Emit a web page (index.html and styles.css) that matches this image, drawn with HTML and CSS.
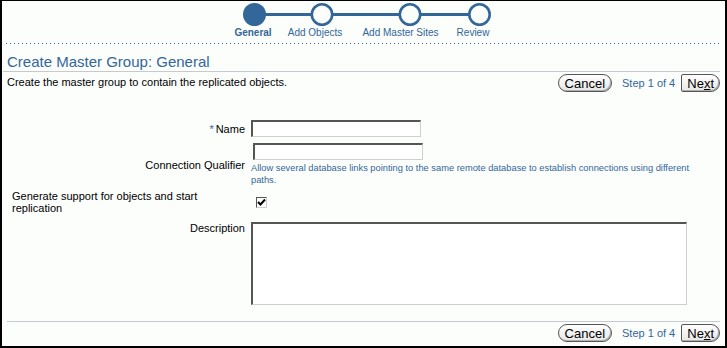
FILE: index.html
```html
<!DOCTYPE html>
<html lang="en">
<head>
    <meta charset="UTF-8">
    <title>Create Master Group: General</title>
    <link rel="stylesheet" href="styles.css">
</head>
<body>
    <div class="page">

        <div class="train">
            <svg class="train-track" width="256" height="26" viewBox="0 0 256 26">
                <line x1="14" y1="13.5" x2="240" y2="13.5" stroke="#336699" stroke-width="3"/>
                <circle cx="14.5" cy="13.5" r="11.5" fill="#336699"/>
                <circle cx="82" cy="13.5" r="10.2" fill="#fcfefc" stroke="#336699" stroke-width="2.6"/>
                <circle cx="170" cy="13.5" r="10.2" fill="#fcfefc" stroke="#336699" stroke-width="2.6"/>
                <circle cx="239.5" cy="13.5" r="10.2" fill="#fcfefc" stroke="#336699" stroke-width="2.6"/>
            </svg>
            <div class="train-labels">
                <span class="train-step current" style="width:62px">General</span>
                <span class="train-step" style="width:62px">Add Objects</span>
                <span class="train-step" style="width:109px">Add Master Sites</span>
                <span class="train-step" style="width:36px">Review</span>
            </div>
        </div>

        <div class="dots"></div>

        <h1 class="title">Create Master Group: General</h1>

        <div class="action-row">
            <span class="intro">Create the master group to contain the replicated objects.</span>
            <div class="actions">
                <button class="btn">Cancel</button>
                <span class="step-count">Step 1 of 4</span>
                <button class="btn btn-next">Ne<u>x</u>t</button>
            </div>
        </div>

        <div class="form">
            <div class="form-row row-name">
                <label class="form-label" for="name"><span class="required">*</span>Name</label>
                <div class="form-field"><input class="text-input" type="text" id="name"></div>
            </div>
            <div class="form-row row-qualifier">
                <label class="form-label" for="qualifier">Connection Qualifier</label>
                <div class="form-field">
                    <input class="text-input shifted" type="text" id="qualifier">
                    <div class="hint">Allow several database links pointing to the same remote database to establish connections using different paths.</div>
                </div>
            </div>
            <div class="form-row row-generate">
                <label class="form-label left" for="generate">Generate support for objects and start replication</label>
                <div class="form-field">
                    <span class="checkbox" id="generate">
                        <svg width="9" height="9" viewBox="0 0 9 9"><path d="M1 4 L3.5 6.5 L8 1.5" fill="none" stroke="#000" stroke-width="2"/></svg>
                    </span>
                </div>
            </div>
            <div class="form-row row-description">
                <label class="form-label" for="description">Description</label>
                <div class="form-field"><textarea class="text-area" id="description"></textarea></div>
            </div>
        </div>

        <div class="footer">
            <div class="actions">
                <button class="btn">Cancel</button>
                <span class="step-count">Step 1 of 4</span>
                <button class="btn btn-next">Ne<u>x</u>t</button>
            </div>
        </div>

    </div>
</body>
</html>
```

FILE: styles.css
```css
body {
    margin: 0;
    font-family: "Liberation Sans", Arial, sans-serif;
    color: #000;
}
.page {
    width: 727px;
    height: 348px;
    box-sizing: border-box;
    border: 2px solid #000;
    border-top-width: 1px;
    background-color: #fcfefc;
    display: flex;
    flex-direction: column;
}

/* step train */
.train {
    display: flex;
    flex-direction: column;
}
.train-track {
    display: block;
    margin-left: 238px;
}
.train-labels {
    display: flex;
    margin-left: 220px;
    font-size: 10px;
    line-height: 12px;
    color: #336699;
}
.train-step {
    text-align: center;
    white-space: nowrap;
}
.train-step.current {
    font-weight: bold;
}
.dots {
    height: 1px;
    margin: 4px 5px 0 4px;
    background: repeating-linear-gradient(to right, #336699 0 1px, transparent 1px 4px);
}

/* header */
.title {
    margin: 9px 5px 0 1px;
    padding-left: 4px;
    font-size: 15px;
    line-height: 18px;
    font-weight: normal;
    color: #336699;
    border-bottom: 1px solid #c5c9d1;
}
.action-row {
    display: flex;
    align-items: center;
    justify-content: space-between;
    margin: 0 5px 0 5px;
    padding-top: 2px;
}
.intro {
    font-size: 11px;
    line-height: 13px;
    margin-bottom: 2px;
}
.actions {
    display: flex;
    align-items: center;
}
.btn {
    height: 18px;
    box-sizing: border-box;
    padding: 0 6px;
    font-family: "Liberation Sans", Arial, sans-serif;
    font-size: 13px;
    line-height: 15px;
    color: #000;
    border: 1px solid #555;
    border-radius: 9px;
    background: linear-gradient(#ffffff, #e6e6e6);
    box-shadow: inset -1px -1px 0 #b0b0b0;
    cursor: pointer;
}
.btn-next {
    padding: 0 5px;
    border-radius: 2px 9px 9px 2px;
}
.step-count {
    margin: 0 6px 0 10px;
    font-size: 11px;
    color: #336699;
}

/* form */
.form {
    margin-top: 28px;
}
.form-row {
    display: grid;
    grid-template-columns: 243px 1fr;
    column-gap: 6px;
    align-items: center;
}
.form-label {
    font-size: 11px;
    line-height: 12px;
    text-align: right;
}
.form-label.left {
    text-align: left;
    padding-left: 10px;
    padding-right: 28px;
}
.required {
    margin-right: 2px;
    color: #336699;
}
.row-qualifier {
    margin-top: 6px;
}
.row-generate {
    margin-top: 4px;
}
.row-description {
    margin-top: 8px;
    align-items: start;
}
.text-input {
    display: block;
    width: 170px;
    height: 17px;
    box-sizing: border-box;
    margin: 0;
    border-style: solid;
    border-width: 2px 1px 1px 2px;
    border-color: #555 #cfcfcf #cfcfcf #555;
    background-color: #fff;
}
.text-input.shifted {
    margin-left: 2px;
}
.hint {
    max-width: 445px;
    margin-top: 2px;
    font-size: 9.3px;
    line-height: 12px;
    color: #336699;
}
.checkbox {
    display: flex;
    align-items: center;
    justify-content: center;
    width: 11px;
    height: 11px;
    box-sizing: border-box;
    margin-left: 5px;
    border-style: solid;
    border-width: 1px;
    border-color: #555 #cfcfcf #cfcfcf #555;
    background-color: #fff;
}
.text-area {
    display: block;
    width: 436px;
    height: 83px;
    box-sizing: border-box;
    margin: 0;
    resize: none;
    border-style: solid;
    border-width: 2px 1px 1px 2px;
    border-color: #555 #cfcfcf #cfcfcf #555;
    background-color: #fff;
}

/* footer */
.footer {
    margin: auto 5px 0 5px;
    padding: 2px 0 4px 0;
    border-top: 1px solid #c5c9d1;
    display: flex;
    justify-content: flex-end;
}
```
